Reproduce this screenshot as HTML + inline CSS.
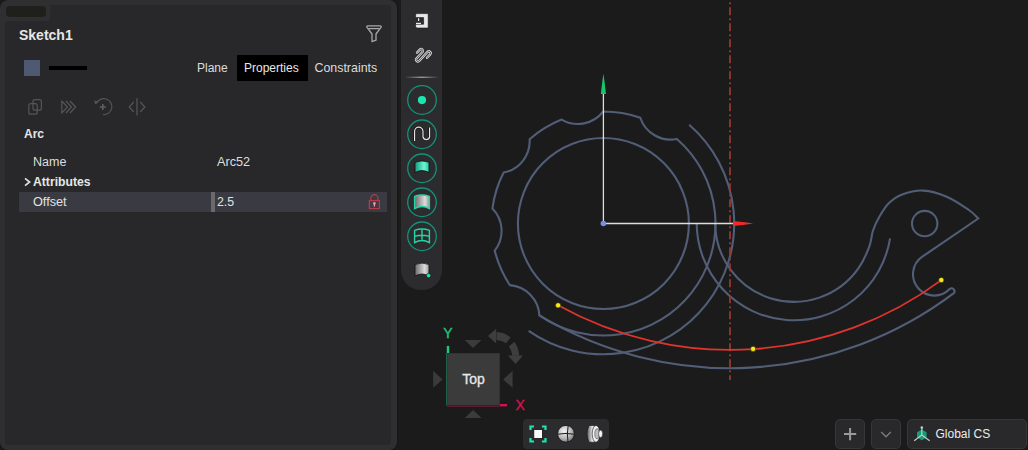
<!DOCTYPE html>
<html><head><meta charset="utf-8">
<style>
*{box-sizing:border-box;margin:0;padding:0}
html,body{width:1028px;height:450px;overflow:hidden;background:#1b1b1c;font-family:"Liberation Sans",sans-serif;color:#e4e4e4}
.abs{position:absolute}
#panel{position:absolute;left:0;top:0;width:397px;height:450px;background:#2f2f31;border-radius:8px;box-shadow:0 0 2px #111}
#inner{position:absolute;left:5px;top:5px;width:386px;height:440px;background:#28282a;border-radius:3px}
#tab{position:absolute;left:5px;top:5px;width:45px;height:16px;background:#2f2f31;border-bottom-right-radius:4px}
#tabin{position:absolute;left:6px;top:6px;width:40px;height:11px;background:#1f1f1b;border-radius:4px}
.t{position:absolute;white-space:nowrap;line-height:1}
#toolbar{position:absolute;left:401px;top:-30px;width:41px;height:320px;background:#2c2c2e;border-radius:0 0 20px 20px}
.circ{position:absolute;left:406px;width:31px;height:31px;border:1.6px solid #17957a;border-radius:50%}
.btn{position:absolute;top:419px;height:30px;background:#29292b;border:1px solid #37373a;border-radius:5px}
</style></head><body>
<div id="panel"></div>
<div id="inner"></div>
<div id="tab"></div>
<div id="tabin"></div>

<!-- header -->
<div class="t" style="left:19px;top:28px;font-size:14px;font-weight:700;color:#e6e6e6">Sketch1</div>
<div class="abs" style="left:24px;top:60px;width:16px;height:16px;background:#4f5a72"></div>
<div class="abs" style="left:49px;top:66px;width:38px;height:4px;background:#000"></div>
<div class="abs" style="left:237px;top:55px;width:71px;height:26px;background:#000"></div>
<div class="t" style="left:197px;top:62px;font-size:12px;color:#dcdcdc">Plane</div>
<div class="t" style="left:244px;top:62px;font-size:12px;color:#e8e8e8">Properties</div>
<div class="t" style="left:314.5px;top:62px;font-size:12.4px;color:#dcdcdc">Constraints</div>

<!-- props -->
<div class="t" style="left:24px;top:128px;font-size:12px;font-weight:700;color:#e6e6e6">Arc</div>
<div class="t" style="left:33px;top:156px;font-size:12.5px;color:#dedede">Name</div>
<div class="t" style="left:217px;top:156px;font-size:12.7px;color:#dedede">Arc52</div>
<div class="t" style="left:33px;top:175.5px;font-size:12.2px;font-weight:700;color:#e6e6e6">Attributes</div>
<div class="abs" style="left:19px;top:192px;width:368px;height:20px;background:#3a3a43"></div>
<div class="abs" style="left:211px;top:192px;width:4px;height:20px;background:#6a6a6a"></div>
<div class="t" style="left:33px;top:196px;font-size:12.7px;color:#e2e2e2">Offset</div>
<div class="t" style="left:217px;top:196px;font-size:12.3px;color:#e2e2e2">2.5</div>

<!-- toolbar -->
<div id="toolbar"></div>


<svg class="abs" style="left:0;top:0" width="1028" height="450" viewBox="0 0 1028 450">
<g fill="none" stroke="#525e77" stroke-width="2.1">
<path d="M676.86 138.95 A112 112 0 0 1 539.39 315.41 A32 32 0 0 0 509.87 285.11 A112 112 0 0 1 494.75 250.70 A32 32 0 0 0 492.41 208.47 A112 112 0 0 1 503.64 172.59 A32 32 0 0 0 529.63 139.22 A112 112 0 0 1 561.67 119.56 A32 32 0 0 0 603.19 111.50 A112 112 0 0 1 640.26 117.74 A32 32 0 0 0 676.86 138.95 Z"/>
<path d="M689.19 124.76 A130.8 130.8 0 0 1 528.65 330.83"/>
<circle cx="603.4" cy="223.5" r="85.5"/>
<path d="M696.70 223.00 A97.3 97.3 0 0 0 890.08 238.35"/>
<path d="M715.20 223.00 A78.8 78.8 0 0 0 858.55 268.20 C862.37 262.74 866.79 253.18 869.20 246.90 C871.61 240.62 871.28 235.57 873.00 230.50 C874.72 225.43 876.83 221.08 879.50 216.50 C882.17 211.92 885.22 206.68 889.00 203.00 C892.78 199.32 896.48 196.47 902.20 194.40 C907.92 192.33 915.88 190.22 923.30 190.60 C930.72 190.98 939.10 193.47 946.70 196.70 C954.30 199.93 963.63 206.37 968.90 210.00 C974.17 213.63 976.73 217.08 978.30 218.50 L922.30 256.70 A21.3 21.3 0 1 0 949.62 289.10 A2.930105445721574 2.930105445721574 0 0 1 953.82 293.16 A371 371 0 0 1 539.39 315.41"/>
<circle cx="924.7" cy="223.6" r="12.7"/>
</g>
<line x1="730" y1="0" x2="730" y2="380" stroke="#95382f" stroke-width="1.8" stroke-dasharray="2 3 8 3" stroke-dashoffset="-2.3"/>
<path d="M558.1 305.3 A354.3 354.3 0 0 0 941.3 280.1" fill="none" stroke="#e0342c" stroke-width="1.8"/>
<line x1="603.4" y1="94" x2="603.4" y2="223.5" stroke="#dedede" stroke-width="1.3"/>
<line x1="603.4" y1="223.5" x2="733" y2="223.5" stroke="#dedede" stroke-width="1.3"/>
<path d="M603.4 73.7 L604.3 80 L606 94 L600.8 94 L602.5 80 Z" fill="#18c46c"/>
<path d="M753.2 223.5 L745 222.2 L733 220.9 L733 226 L745 224.8 Z" fill="#ee2a2a"/>
<circle cx="603.4" cy="223.5" r="2.8" fill="#6f8ff0"/>
<circle cx="558.1" cy="305.3" r="2.6" fill="#f5ee10" stroke="#222" stroke-width="0.6"/>
<circle cx="753.1" cy="348.9" r="2.6" fill="#f5ee10" stroke="#222" stroke-width="0.6"/>
<circle cx="941.3" cy="280" r="2.6" fill="#f5ee10" stroke="#222" stroke-width="0.6"/>
</svg>

<!-- bottom -->
<div class="abs" style="left:523px;top:419px;width:86px;height:30px;background:#2c2c2e;border-radius:4px"></div>
<div class="btn" style="left:835px;width:30px"></div>
<div class="btn" style="left:871px;width:30px"></div>
<div class="btn" style="left:907px;width:120px"></div>

<svg class="abs" style="left:0;top:0" width="1028" height="450" viewBox="0 0 1028 450">
<defs>
<linearGradient id="gTeal" x1="0" y1="0" x2="1" y2="0">
<stop offset="0" stop-color="#0f9e7c"/><stop offset="0.65" stop-color="#6ff5d2"/><stop offset="1" stop-color="#1fc9a0"/>
</linearGradient>
<linearGradient id="gGray" x1="0" y1="0" x2="1" y2="0">
<stop offset="0" stop-color="#6a6a6a"/><stop offset="0.7" stop-color="#dcdcdc"/><stop offset="1" stop-color="#9a9a9a"/>
</linearGradient>
<radialGradient id="gSphere" cx="0.4" cy="0.35" r="0.7">
<stop offset="0" stop-color="#f4f4f4"/><stop offset="0.6" stop-color="#b8b8b8"/><stop offset="1" stop-color="#707070"/>
</radialGradient>
<linearGradient id="gCyl" x1="0" y1="0" x2="1" y2="0">
<stop offset="0" stop-color="#5a5a5a"/><stop offset="0.5" stop-color="#e8e8e8"/><stop offset="1" stop-color="#8a8a8a"/>
</linearGradient>
<linearGradient id="gSep" x1="0" y1="0" x2="1" y2="0">
<stop offset="0" stop-color="#2c2c2e"/><stop offset="0.5" stop-color="#9a9a9a"/><stop offset="1" stop-color="#2c2c2e"/>
</linearGradient>
</defs>
<!-- filter icon -->
<g fill="none" stroke="#a8a8a8" stroke-width="1.3" stroke-linejoin="round">
<path d="M368 25.8 H380 Q382 25.8 380.8 27.6 L376 34 V40.2 L372 41.6 V34 L367.2 27.6 Q366 25.8 368 25.8 Z"/>
<path d="M368.6 28.6 H379.4"/>
</g>
<!-- row icons -->
<g fill="none" stroke="#555557" stroke-width="1.2" stroke-linejoin="round">
<rect x="33" y="99.6" width="8.4" height="10.6" rx="2"/>
<rect x="28.8" y="103.6" width="8.4" height="10.6" rx="2"/>
<path d="M61.8 101 V113 L67.4 107 Z"/>
<path d="M66 101 L71.4 107 L66 113 M70 101 L75.6 107 L70 113"/>
<path d="M96.5 103.5 A8 8 0 1 1 103 114.6"/>
<path d="M133.8 102 L129.2 107 L133.8 112 M140.2 102 L144.8 107 L140.2 112"/>
</g>
<path d="M94.3 100.6 L98.4 101.4 L95.1 104.6 Z" fill="#555557"/>
<path d="M102.8 104 V110 M99.8 107 H105.8" stroke="#5e5e60" stroke-width="1.6"/>
<rect x="136" y="98.2" width="2" height="17.2" fill="#444446"/>
<!-- chevron attributes -->
<path d="M25 178.4 L29.6 182 L25 185.6" fill="none" stroke="#dedede" stroke-width="1.7"/>
<!-- lock -->
<rect x="369.4" y="200.6" width="10" height="8" fill="#4a3644" stroke="#b43c48" stroke-width="1.2"/>
<path d="M370.8 200.5 V198.5 A3.6 3.8 0 0 1 378 198.5 V200.5" fill="none" stroke="#b43c48" stroke-width="1.2"/>
<circle cx="374.4" cy="203.4" r="1.3" fill="#dca4ac"/>
<rect x="373.8" y="203.6" width="1.2" height="3" fill="#dca4ac"/>

<!-- toolbar icons -->
<path d="M416.8 13.6 H428.2 V28 H416.8 L415.6 26.8 V24.2 H423.6 V17.6 H415.6 V14.8 Z" fill="#e8e8e8" stroke="#111" stroke-width="0.6"/>
<rect x="418" y="18.2" width="1.2" height="2.8" fill="#e8e8e8"/>
<rect x="416" y="22.8" width="5" height="1.2" fill="#e8e8e8"/>
<g stroke-linecap="round" stroke-linejoin="round" fill="none">
<path d="M417.03 52.61 L419.82 49.62 A1.8 1.8 0 0 1 422.46 52.07 L416.46 58.51 A1.8 1.8 0 0 0 419.09 60.96 L427.54 51.89 A1.8 1.8 0 0 1 430.18 54.35 L426.97 57.79" stroke="#e2e2e2" stroke-width="2.3"/>
<path d="M417.03 52.61 L419.82 49.62 A1.8 1.8 0 0 1 422.46 52.07 L416.46 58.51 A1.8 1.8 0 0 0 419.09 60.96 L427.54 51.89 A1.8 1.8 0 0 1 430.18 54.35 L426.97 57.79" stroke="#2c2c2e" stroke-width="0.75"/>
</g>
<rect x="404.6" y="76.6" width="34.6" height="1.4" fill="url(#gSep)"/>
<g fill="none" stroke="#14917a" stroke-width="1.3">
<circle cx="422" cy="100" r="14.3"/>
<circle cx="422" cy="134.3" r="14.3"/>
<circle cx="422" cy="168.3" r="14.3"/>
<circle cx="422" cy="202.3" r="14.3"/>
<circle cx="422" cy="236.3" r="14.3"/>
</g>
<circle cx="422" cy="100.1" r="4.1" fill="#1ce6b0"/>
<path d="M414.6 141 V131.4 A4.2 4.2 0 0 1 423 131.4 V137 A3.4 3.4 0 0 0 429.6 137 V127.6" fill="none" stroke="#111" stroke-width="2.4"/>
<path d="M414.6 141 V131.4 A4.2 4.2 0 0 1 423 131.4 V137 A3.4 3.4 0 0 0 429.6 137 V127.6" fill="none" stroke="#e4e4e4" stroke-width="1.2"/>
<path d="M415 162.2 Q422 159.6 429 162.2 V172.6 Q422 168.6 415 172.6 Z" fill="url(#gTeal)" stroke="#0b0b0b" stroke-width="0.8"/>
<path d="M414.6 196.4 Q422 193.6 429.4 196.4 V208.6 Q422 204.4 414.6 208.6 Z" fill="url(#gGray)" stroke="#22d6a6" stroke-width="1.4"/>
<g fill="none" stroke="#22d6a6" stroke-width="1.4">
<path d="M414.6 230.4 Q422 227.6 429.4 230.4 V242.6 Q422 238.4 414.6 242.6 Z"/>
<path d="M414.6 236.4 Q422 234 429.4 236.4 M422 229.6 V239.8"/>
</g>
<path d="M415 264.4 Q422 261.8 429 264.4 V276 Q422 272 415 276 Z" fill="url(#gGray)" stroke="#111" stroke-width="0.8"/>
<circle cx="428.6" cy="275.6" r="2.2" fill="#1ce6b0" stroke="#111" stroke-width="0.6"/>

<!-- view cube -->
<rect x="447.3" y="353.2" width="52.4" height="51.9" fill="#3b3b3c"/>
<path d="M446.6 353 V405.6" stroke="#1e6048" stroke-width="1.3"/>
<path d="M448 345.9 V353" stroke="#22c77a" stroke-width="2.4"/>
<path d="M447 406.3 H500" stroke="#5e1a34" stroke-width="1.4"/>
<path d="M500 405.2 H507" stroke="#dc1050" stroke-width="2.3"/>
<g fill="#3b3b3c">
<path d="M464.7 340 H481.5 L473.1 348 Z"/>
<path d="M464.7 418 H481.5 L473.1 410 Z"/>
<path d="M433.2 371 V387.8 L442.6 379.4 Z"/>
<path d="M512.6 371 V387.8 L503.2 379.4 Z"/>
</g>
<path d="M496.5 332 Q504.5 332.2 510.6 337.6 L506 343.2 Q502 340.2 496.5 340 Z" fill="#3e3e3f"/>
<path d="M496.2 328.8 L488 336 L496.2 343.6 Z" fill="#3e3e3f"/>
<path d="M509 346.4 L514.4 341.8 Q518.8 348 519.2 355.8 L512.2 355.8 Q511.6 350 509 346.4 Z" fill="#3e3e3f"/>
<path d="M508 355.4 L523 355.4 L515.6 364 Z" fill="#3e3e3f"/>
<text x="443.2" y="338.2" font-family="Liberation Sans" font-size="14" fill="#22c77a" stroke="#22c77a" stroke-width="0.35">Y</text>
<text x="515.4" y="410.2" font-family="Liberation Sans" font-size="14" fill="#dc1050" stroke="#dc1050" stroke-width="0.35">X</text>
<text x="473.6" y="384.2" text-anchor="middle" font-family="Liberation Sans" font-size="14" fill="#e8e8e8" stroke="#e8e8e8" stroke-width="0.3">Top</text>

<!-- bottom toolbar icons -->
<path d="M530.5 430 V426.5 H534 M542 426.5 H545.5 V430 M545.5 438 V441.5 H542 M534 441.5 H530.5 V438" fill="none" stroke="#1fe3b0" stroke-width="2.2"/>
<rect x="533.8" y="429.6" width="8.6" height="8.8" fill="#fafafa" stroke="#111" stroke-width="0.8"/>
<circle cx="566" cy="433.8" r="8.4" fill="url(#gSphere)" stroke="#111" stroke-width="0.8"/>
<path d="M557.8 434.2 Q566 432.6 574.2 434.2 M568.2 425.6 Q566.6 433.8 568 442" fill="none" stroke="#1c1c1c" stroke-width="1"/>
<path d="M589 425.5 H596 Q600 433.8 596 442.2 H589 Q585 433.8 589 425.5 Z" fill="url(#gCyl)" stroke="#111" stroke-width="0.6"/>
<ellipse cx="596" cy="433.8" rx="3.8" ry="8.4" fill="#f0f0f0" stroke="#111" stroke-width="0.6"/>
<ellipse cx="597" cy="433.8" rx="2.2" ry="5" fill="#bdbdbd" stroke="#333" stroke-width="0.5"/>
<ellipse cx="600.6" cy="433.8" rx="2" ry="3.6" fill="#f4f4f4" stroke="#222" stroke-width="0.5"/>

<!-- bottom right -->
<path d="M844 434 H856.2 M850.1 428 V440.2" stroke="#9a9a9a" stroke-width="2"/>
<path d="M881.2 432 L886 436.8 L890.8 432" fill="none" stroke="#7a7a7a" stroke-width="1.4"/>
<path d="M921.8 429.6 L926.6 432.3 V437.6 L921.8 440.3 L917 437.6 V432.3 Z" fill="#169c78"/>
<path d="M921.8 427 V435 L914.2 440.8 M921.8 435 L929.6 440.8" fill="none" stroke="#c8c8c8" stroke-width="1.2"/>
<circle cx="921.8" cy="427.6" r="1.3" fill="#c8c8c8"/>
</svg>

<div class="t" style="left:935.5px;top:428px;font-size:12px;color:#ececec">Global CS</div>

</body></html>
